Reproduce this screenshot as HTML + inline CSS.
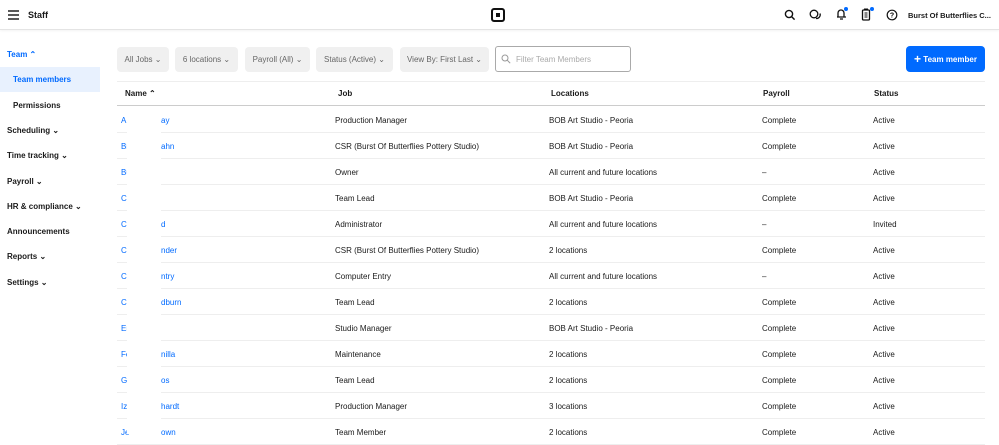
<!DOCTYPE html>
<html><head><meta charset="utf-8"><style>
*{margin:0;padding:0;box-sizing:border-box}
body{width:999px;height:434px;overflow:hidden;background:#fff;font-family:"Liberation Sans",sans-serif;font-size:8px;color:#1a1a1a;position:relative}
.a{position:absolute;white-space:nowrap}
.b{font-weight:bold}
.top{position:absolute;left:0;top:0;width:999px;height:30px;border-bottom:1px solid #e4e4e4;box-shadow:0 1px 2px rgba(0,0,0,.05)}
.nav{position:absolute;left:7px;font-weight:bold;font-size:8px}
.f{position:absolute;top:47px;height:25px;background:#f0f0f0;border-radius:4px;color:#666;font-size:8px;line-height:25px;text-align:center}
.row{position:absolute;left:117px;width:868px;height:26px;border-bottom:1px solid #eee}
.row span{position:absolute;top:9px}
.n{color:#006aff}
</style></head><body>
<div class="top">
<svg class="a" style="left:8px;top:10px" width="11" height="10"><path d="M0 1h11M0 5h11M0 9h11" stroke="#222" stroke-width="1.4"/></svg>
<div class="a b" style="left:28px;top:10px;font-size:9px">Staff</div>
<svg class="a" style="left:491px;top:8px" width="14" height="14"><rect x="1" y="1" width="12" height="12" rx="2" fill="none" stroke="#111" stroke-width="2"/><rect x="5" y="5" width="4" height="4" fill="#111"/></svg>
<svg class="a" style="left:784px;top:9px" width="12" height="12"><circle cx="5" cy="5" r="3.6" fill="none" stroke="#111" stroke-width="1.4"/><path d="M7.6 7.6l3 3" stroke="#111" stroke-width="1.5"/></svg>
<svg class="a" style="left:809px;top:9px" width="13" height="12"><circle cx="5" cy="5" r="3.8" fill="none" stroke="#111" stroke-width="1.3"/><path d="M7 9.5a3.8 3.8 0 0 0 4-5" fill="none" stroke="#111" stroke-width="1.3"/></svg>
<svg class="a" style="left:835px;top:7px" width="14" height="14"><path d="M3 10V6a3 3 0 0 1 6 0v4h1M2 10h9M5 12h3" fill="none" stroke="#111" stroke-width="1.3"/><circle cx="11" cy="2" r="2" fill="#006aff"/></svg>
<svg class="a" style="left:861px;top:7px" width="14" height="15"><rect x="1.5" y="3" width="7" height="10" rx="1" fill="none" stroke="#111" stroke-width="1.3"/><path d="M3.5 3V2h3v1M3.5 6h3M3.5 8h3M3.5 10h3" stroke="#111" stroke-width="1"/><circle cx="11" cy="2" r="2" fill="#006aff"/></svg>
<svg class="a" style="left:886px;top:9px" width="12" height="12"><circle cx="6" cy="6" r="4.8" fill="none" stroke="#111" stroke-width="1.2"/><text x="6" y="8.5" font-size="7" font-weight="bold" text-anchor="middle" font-family="Liberation Sans">?</text></svg>
<div class="a b" style="left:908px;top:11px;font-size:7.5px">Burst Of Butterflies C...</div>
</div>

<div class="nav" style="top:50px;color:#006aff">Team ⌃</div>
<div class="a" style="left:0;top:67px;width:100px;height:25px;background:#e8f1fe"></div>
<div class="nav" style="left:13px;top:75px;color:#006aff">Team members</div>
<div class="nav" style="left:13px;top:101px">Permissions</div>
<div class="nav" style="top:126px">Scheduling ⌄</div>
<div class="nav" style="top:151px">Time tracking ⌄</div>
<div class="nav" style="top:177px">Payroll ⌄</div>
<div class="nav" style="top:202px">HR &amp; compliance ⌄</div>
<div class="nav" style="top:227px">Announcements</div>
<div class="nav" style="top:252px">Reports ⌄</div>
<div class="nav" style="top:278px">Settings ⌄</div>

<div class="f" style="left:117px;width:52px">All Jobs ⌄</div>
<div class="f" style="left:175px;width:63px">6 locations ⌄</div>
<div class="f" style="left:245px;width:65px">Payroll (All) ⌄</div>
<div class="f" style="left:316px;width:77px">Status (Active) ⌄</div>
<div class="f" style="left:400px;width:89px">View By: First Last ⌄</div>
<div class="a" style="left:495px;top:46px;width:136px;height:26px;border:1px solid #aaa;border-radius:3px"></div>
<svg class="a" style="left:501px;top:54px" width="10" height="10"><circle cx="4" cy="4" r="3" fill="none" stroke="#999" stroke-width="1"/><path d="M6.2 6.2l3 3" stroke="#999"/></svg>
<div class="a" style="left:516px;top:55px;color:#aaa">Filter Team Members</div>
<div class="a b" style="left:906px;top:46px;width:79px;height:26px;background:#006aff;border-radius:4px;color:#fff;line-height:26px;text-align:center"><span style="font-size:12px;vertical-align:-1px">+</span> Team member</div>

<div class="a" style="left:117px;top:81px;width:868px;height:25px;border-top:1px solid #eee;border-bottom:1.5px solid #ccc"></div>
<div class="a b" style="left:125px;top:89px">Name ⌃</div>
<div class="a b" style="left:338px;top:89px">Job</div>
<div class="a b" style="left:551px;top:89px">Locations</div>
<div class="a b" style="left:763px;top:89px">Payroll</div>
<div class="a b" style="left:874px;top:89px">Status</div>

<div class="row" style="top:107px"><span class="n" style="left:4px">A:</span><span class="n" style="left:44px">ay</span><span style="left:218px">Production Manager</span><span style="left:432px">BOB Art Studio - Peoria</span><span style="left:645px">Complete</span><span style="left:756px">Active</span></div>
<div class="row" style="top:133px"><span class="n" style="left:4px">Br</span><span class="n" style="left:44px">ahn</span><span style="left:218px">CSR (Burst Of Butterflies Pottery Studio)</span><span style="left:432px">BOB Art Studio - Peoria</span><span style="left:645px">Complete</span><span style="left:756px">Active</span></div>
<div class="row" style="top:159px"><span class="n" style="left:4px">Bu</span><span style="left:218px">Owner</span><span style="left:432px">All current and future locations</span><span style="left:645px">–</span><span style="left:756px">Active</span></div>
<div class="row" style="top:185px"><span class="n" style="left:4px">Ca</span><span style="left:218px">Team Lead</span><span style="left:432px">BOB Art Studio - Peoria</span><span style="left:645px">Complete</span><span style="left:756px">Active</span></div>
<div class="row" style="top:211px"><span class="n" style="left:4px">Cl</span><span class="n" style="left:44px">d</span><span style="left:218px">Administrator</span><span style="left:432px">All current and future locations</span><span style="left:645px">–</span><span style="left:756px">Invited</span></div>
<div class="row" style="top:237px"><span class="n" style="left:4px">Cl</span><span class="n" style="left:44px">nder</span><span style="left:218px">CSR (Burst Of Butterflies Pottery Studio)</span><span style="left:432px">2 locations</span><span style="left:645px">Complete</span><span style="left:756px">Active</span></div>
<div class="row" style="top:263px"><span class="n" style="left:4px">Co</span><span class="n" style="left:44px">ntry</span><span style="left:218px">Computer Entry</span><span style="left:432px">All current and future locations</span><span style="left:645px">–</span><span style="left:756px">Active</span></div>
<div class="row" style="top:289px"><span class="n" style="left:4px">Co</span><span class="n" style="left:44px">dburn</span><span style="left:218px">Team Lead</span><span style="left:432px">2 locations</span><span style="left:645px">Complete</span><span style="left:756px">Active</span></div>
<div class="row" style="top:315px"><span class="n" style="left:4px">Er</span><span style="left:218px">Studio Manager</span><span style="left:432px">BOB Art Studio - Peoria</span><span style="left:645px">Complete</span><span style="left:756px">Active</span></div>
<div class="row" style="top:341px"><span class="n" style="left:4px">Fe</span><span class="n" style="left:44px">nilla</span><span style="left:218px">Maintenance</span><span style="left:432px">2 locations</span><span style="left:645px">Complete</span><span style="left:756px">Active</span></div>
<div class="row" style="top:367px"><span class="n" style="left:4px">Ge</span><span class="n" style="left:44px">os</span><span style="left:218px">Team Lead</span><span style="left:432px">2 locations</span><span style="left:645px">Complete</span><span style="left:756px">Active</span></div>
<div class="row" style="top:393px"><span class="n" style="left:4px">Iz</span><span class="n" style="left:44px">hardt</span><span style="left:218px">Production Manager</span><span style="left:432px">3 locations</span><span style="left:645px">Complete</span><span style="left:756px">Active</span></div>
<div class="row" style="top:419px"><span class="n" style="left:4px">Je</span><span class="n" style="left:44px">own</span><span style="left:218px">Team Member</span><span style="left:432px">2 locations</span><span style="left:645px">Complete</span><span style="left:756px">Active</span></div>
<div class="a" style="left:127px;top:107px;width:34px;height:327px;background:#fff"></div>
</body></html>
